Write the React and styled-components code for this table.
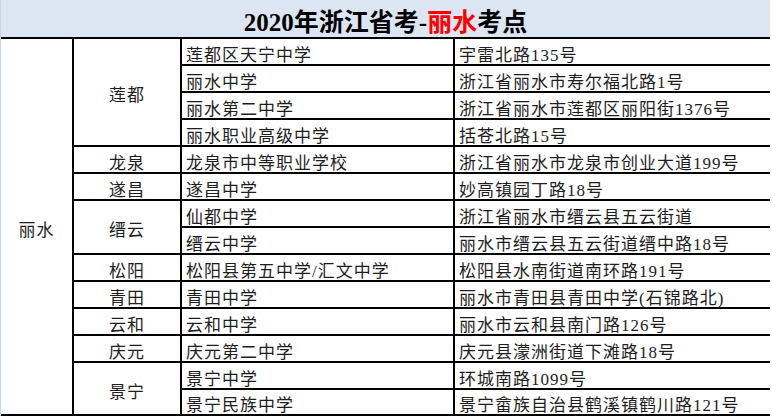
import React from 'react';
import styled, { createGlobalStyle } from 'styled-components';

const GlobalStyle = createGlobalStyle`
  html, body {
    margin: 0;
    padding: 0;
    background: #ffffff;
  }
`;

const Sheet = styled.div`
  display: grid;
  grid-template-columns: 71px 106px 271px 315px;
  grid-template-rows: 37px repeat(13, 25px) 24px;
  gap: 2px;
  width: 767px;
  padding: 0 2px 2px 0;
  background: #000000;
  border-left: 1px solid #c8d3e3;
  font-family: "Liberation Serif", "Noto Sans CJK SC", serif;
  color: #1e1e1e;
`;

const Title = styled.div`
  grid-column: 1 / span 4;
  grid-row: 1;
  background: #dce6f2;
  display: flex;
  align-items: center;
  justify-content: center;
  padding-top: 2px;
  font-size: 25px;
  font-weight: 700;
  color: #000000;
`;

const Red = styled.span`
  color: #ff0000;
`;

const Cell = styled.div`
  grid-column: ${p => p.col};
  grid-row: ${p => p.row} / span ${p => p.span || 1};
  background: #ffffff;
  display: flex;
  align-items: center;
  justify-content: ${p => (p.center ? 'center' : 'flex-start')};
  padding: 3px 0 0 ${p => (p.center ? 0 : 4)}px;
  font-size: 17px;
  letter-spacing: 1px;
  white-space: nowrap;
  overflow: hidden;
`;

const groups = [
  {
    county: '莲都',
    schools: [
      ['莲都区天宁中学', '宇雷北路135号'],
      ['丽水中学', '浙江省丽水市寿尔福北路1号'],
      ['丽水第二中学', '浙江省丽水市莲都区丽阳街1376号'],
      ['丽水职业高级中学', '括苍北路15号'],
    ],
  },
  { county: '龙泉', schools: [['龙泉市中等职业学校', '浙江省丽水市龙泉市创业大道199号']] },
  { county: '遂昌', schools: [['遂昌中学', '妙高镇园丁路18号']] },
  {
    county: '缙云',
    schools: [
      ['仙都中学', '浙江省丽水市缙云县五云街道'],
      ['缙云中学', '丽水市缙云县五云街道缙中路18号'],
    ],
  },
  { county: '松阳', schools: [['松阳县第五中学/汇文中学', '松阳县水南街道南环路191号']] },
  { county: '青田', schools: [['青田中学', '丽水市青田县青田中学(石锦路北)']] },
  { county: '云和', schools: [['云和中学', '丽水市云和县南门路126号']] },
  { county: '庆元', schools: [['庆元第二中学', '庆元县濛洲街道下滩路18号']] },
  {
    county: '景宁',
    schools: [
      ['景宁中学', '环城南路1099号'],
      ['景宁民族中学', '景宁畲族自治县鹤溪镇鹤川路121号'],
    ],
  },
];

export default function App() {
  // 每个县从第几行开始
  let row = 2;
  const cells = [];
  groups.forEach(g => {
    cells.push(
      <Cell key={g.county} col={2} row={row} span={g.schools.length} center>
        {g.county}
      </Cell>
    );
    g.schools.forEach((s, i) => {
      cells.push(
        <Cell key={s[0]} col={3} row={row + i}>{s[0]}</Cell>,
        <Cell key={s[1]} col={4} row={row + i}>{s[1]}</Cell>
      );
    });
    row += g.schools.length;
  });

  return (
    <>
      <GlobalStyle />
      <Sheet>
        <Title>
          2020年浙江省考-<Red>丽水</Red>考点
        </Title>
        <Cell col={1} row={2} span={row - 2} center>丽水</Cell>
        {cells}
      </Sheet>
    </>
  );
}
